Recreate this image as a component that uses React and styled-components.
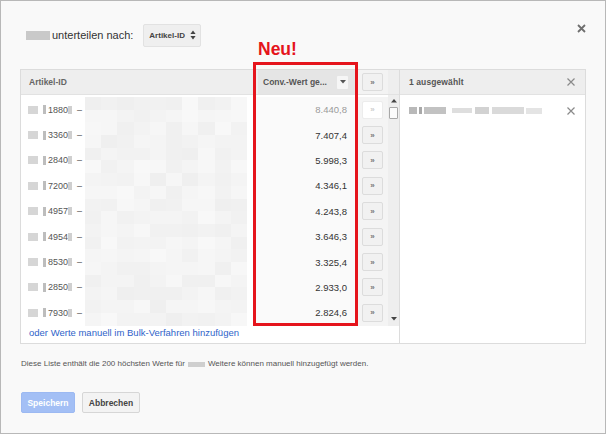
import React from "react";
import styled, { createGlobalStyle } from "styled-components";

const GlobalStyle = createGlobalStyle`
  html, body {
    margin: 0;
    padding: 0;
    background: #ffffff;
  }
  body {
    font-family: "Liberation Sans", Arial, sans-serif;
  }
`;

const ROWS = [
  { id: "1880", value: "8.440,8", added: true },
  { id: "3360", value: "7.407,4" },
  { id: "2840", value: "5.998,3" },
  { id: "7200", value: "4.346,1" },
  { id: "4957", value: "4.243,8" },
  { id: "4954", value: "3.646,3" },
  { id: "8530", value: "3.325,4" },
  { id: "2850", value: "2.933,0" },
  { id: "7930", value: "2.824,6" },
];

// deterministic light greys for the pixelated (blurred) product names
function shade(row, cell) {
  const n = Math.sin(row * 12.9898 + cell * 78.233) * 43758.5453;
  const f = n - Math.floor(n);
  const v = Math.round(239 + f * 9);
  return `rgb(${v},${v},${v})`;
}

export default function App() {
  return (
    <>
      <GlobalStyle />
      <Frame>
        <TopRow>
          <Blur $w={24} $h={9} $c="#c9c9c9" />
          <Label>unterteilen nach:</Label>
          <Select>
            Artikel-ID
            <svg width="6" height="10" viewBox="0 0 6 10">
              <path d="M3 0.5 L5.6 4 L0.4 4 Z M3 9.5 L5.6 6 L0.4 6 Z" fill="#444" />
            </svg>
          </Select>
          <Close>
            <svg width="9" height="9" viewBox="0 0 9 9">
              <path d="M1 1 L8 8 M8 1 L1 8" stroke="#6f6f6f" strokeWidth="1.8" />
            </svg>
          </Close>
        </TopRow>

        <Table>
          <LeftPanel>
            <HeadRow>
              <HeadCell>Artikel-ID</HeadCell>
              <SortHead>
                Conv.-Wert ge...
                <MiniDrop>
                  <svg width="6" height="4" viewBox="0 0 6 4">
                    <path d="M0 0 L6 0 L3 3.5 Z" fill="#555" />
                  </svg>
                </MiniDrop>
              </SortHead>
              <ActionHead>
                <AddButton>»</AddButton>
              </ActionHead>
              <ScrollHead />
            </HeadRow>

            <Body>
              <Rows>
                {ROWS.map((row, i) => (
                  <Row key={row.id}>
                    <IdCell>
                      <Blur $w={10} $h={8} $c="#d6d6d6" />
                      <Blur $w={3} $h={9} $c="#bdbdbd" $ml={5} />
                      <IdText>{row.id}</IdText>
                      <Blur $w={4} $h={8} $c="#cfcfcf" />
                      <Dash>–</Dash>
                      <Mosaic>
                        {Array.from({ length: 20 }).map((_, c) => (
                          <MosaicCell key={c} $bg={shade(i, c)} />
                        ))}
                      </Mosaic>
                    </IdCell>
                    <ValueCell $muted={row.added}>{row.value}</ValueCell>
                    <ActionCell>
                      <AddButton $disabled={row.added}>»</AddButton>
                    </ActionCell>
                  </Row>
                ))}
              </Rows>
              <Scrollbar>
                <svg width="6" height="4" viewBox="0 0 6 4">
                  <path d="M0 3.5 L6 3.5 L3 0 Z" fill="#444" />
                </svg>
                <Thumb />
                <Track />
                <svg width="6" height="4" viewBox="0 0 6 4">
                  <path d="M0 0 L6 0 L3 3.5 Z" fill="#444" />
                </svg>
              </Scrollbar>
            </Body>

            <LinkRow>
              <BulkLink href="#">oder Werte manuell im Bulk-Verfahren hinzufügen</BulkLink>
            </LinkRow>
          </LeftPanel>

          <RightPanel>
            <RightHead>
              1 ausgewählt
              <SmallX>
                <svg width="8" height="8" viewBox="0 0 8 8">
                  <path d="M0.5 0.5 L7.5 7.5 M7.5 0.5 L0.5 7.5" stroke="#8a8a8a" strokeWidth="1.2" />
                </svg>
              </SmallX>
            </RightHead>
            <SelectedRow>
              <SelectedName>
                <Blur $w={8} $h={7} $c="#b9b9b9" />
                <Blur $w={3} $h={7} $c="#a9a9a9" $ml={2} />
                <Blur $w={22} $h={7} $c="#c2c2c2" $ml={2} />
                <Blur $w={20} $h={5} $c="#dedede" $ml={6} />
                <Blur $w={14} $h={7} $c="#d2d2d2" $ml={3} />
                <Blur $w={32} $h={7} $c="#dadada" $ml={3} />
                <Blur $w={16} $h={6} $c="#e4e4e4" $ml={2} />
              </SelectedName>
              <SmallX>
                <svg width="8" height="8" viewBox="0 0 8 8">
                  <path d="M0.5 0.5 L7.5 7.5 M7.5 0.5 L0.5 7.5" stroke="#8a8a8a" strokeWidth="1.2" />
                </svg>
              </SmallX>
            </SelectedRow>
          </RightPanel>

          <NewLabel>Neu!</NewLabel>
          <Highlight />
        </Table>

        <Note>
          Diese Liste enthält die 200 höchsten Werte für
          <Blur $w={17} $h={5} $c="#cfcfcf" $ml={3} $mr={3} />
          Weitere können manuell hinzugefügt werden.
        </Note>

        <Buttons>
          <PrimaryButton>Speichern</PrimaryButton>
          <SecondaryButton>Abbrechen</SecondaryButton>
        </Buttons>
      </Frame>
    </>
  );
}

const Frame = styled.div`
  box-sizing: border-box;
  width: 606px;
  height: 434px;
  border: 1px solid #b8b8b8;
  background: #f9f9f9;
  padding: 22px 19px 0 19px;
  display: flex;
  flex-direction: column;
`;

const TopRow = styled.div`
  display: flex;
  align-items: center;
  height: 24px;
  padding-left: 6px;
`;

const Blur = styled.span`
  display: inline-block;
  flex: none;
  width: ${(p) => p.$w}px;
  height: ${(p) => p.$h}px;
  background: ${(p) => p.$c};
  margin-left: ${(p) => p.$ml || 0}px;
  margin-right: ${(p) => p.$mr || 0}px;
  filter: blur(0.7px);
  vertical-align: middle;
`;

const Label = styled.span`
  font-size: 11px;
  color: #333;
  margin-left: 2px;
  margin-right: 10px;
`;

const Select = styled.div`
  box-sizing: border-box;
  height: 23px;
  width: 58px;
  display: flex;
  align-items: center;
  justify-content: space-between;
  padding: 0 4px 0 5px;
  background: #efefef;
  border: 1px solid #e2e2e2;
  border-radius: 2px;
  font-size: 8px;
  font-weight: bold;
  color: #444;
`;

const Close = styled.div`
  margin-left: auto;
  align-self: flex-start;
  margin-top: 1px;
  display: flex;
`;

const Table = styled.div`
  position: relative;
  display: flex;
  margin-top: 22px;
  height: 275px;
`;

const LeftPanel = styled.div`
  box-sizing: border-box;
  width: 380px;
  border: 1px solid #dcdcdc;
  background: #ffffff;
  display: flex;
  flex-direction: column;
`;

const HeadRow = styled.div`
  display: grid;
  grid-template-columns: 232px 104px 31px 11px;
  height: 24px;
  background: #eeeeee;
  border-bottom: 1px solid #e2e2e2;
`;

const HeadCell = styled.div`
  display: flex;
  align-items: center;
  padding-left: 8px;
  font-size: 8.5px;
  font-weight: bold;
  color: #666;
`;

const SortHead = styled.div`
  display: flex;
  align-items: center;
  justify-content: space-between;
  margin: 0 2px 0 5px;
  padding: 0 7px 0 5px;
  background: #e5e5e5;
  font-size: 8.5px;
  font-weight: bold;
  color: #555;
`;

const MiniDrop = styled.div`
  width: 11px;
  height: 13px;
  display: flex;
  align-items: center;
  justify-content: center;
  background: #f6f6f6;
  border-radius: 1px;
`;

const ActionHead = styled.div`
  display: flex;
  align-items: center;
  justify-content: center;
  background: #f3f3f3;
`;

const ScrollHead = styled.div`
  background: #eeeeee;
`;

const Body = styled.div`
  display: flex;
  height: 231px;
`;

const Rows = styled.div`
  width: 367px;
  padding-top: 2px;
`;

const Row = styled.div`
  display: grid;
  grid-template-columns: 232px 104px 31px;
  height: 25.4px;
`;

const IdCell = styled.div`
  display: flex;
  align-items: center;
  padding-left: 7px;
`;

const IdText = styled.span`
  font-size: 9px;
  color: #555;
  margin-left: 2px;
`;

const Dash = styled.span`
  font-size: 9px;
  color: #555;
  margin: 0 3px 0 5px;
`;

const Mosaic = styled.div`
  width: 162px;
  height: 100%;
  display: grid;
  grid-template-columns: repeat(10, 1fr);
  grid-template-rows: 1fr 1fr;
`;

const MosaicCell = styled.div`
  background: ${(p) => p.$bg};
`;

const ValueCell = styled.div`
  display: flex;
  align-items: center;
  justify-content: flex-end;
  padding-right: 10px;
  background: #fafafa;
  font-size: 9.5px;
  color: ${(p) => (p.$muted ? "#9a9a9a" : "#333")};
`;

const ActionCell = styled.div`
  display: flex;
  align-items: center;
  justify-content: center;
  background: #f4f4f4;
`;

const AddButton = styled.div`
  box-sizing: border-box;
  width: 21px;
  height: 18px;
  display: flex;
  align-items: center;
  justify-content: center;
  border: 1px solid ${(p) => (p.$disabled ? "#ececec" : "#dcdcdc")};
  background: ${(p) => (p.$disabled ? "#ffffff" : "#f1f1f1")};
  border-radius: 2px;
  font-size: 8px;
  font-weight: bold;
  color: ${(p) => (p.$disabled ? "#cccccc" : "#777")};
`;

const Scrollbar = styled.div`
  width: 11px;
  background: #eeeeee;
  display: flex;
  flex-direction: column;
  align-items: center;
  padding: 4px 0 5px;
  box-sizing: border-box;
`;

const Thumb = styled.div`
  box-sizing: border-box;
  width: 9px;
  height: 12px;
  margin-top: 4px;
  background: #fbfbfb;
  border: 1px solid #a8a8a8;
  border-radius: 1px;
`;

const Track = styled.div`
  flex: 1;
`;

const LinkRow = styled.div`
  flex: 1;
  padding: 1px 0 0 8px;
  display: flex;
  align-items: flex-start;
  line-height: 12px;
`;

const BulkLink = styled.a`
  font-size: 9.5px;
  color: #2f63c9;
  text-decoration: none;
`;

const RightPanel = styled.div`
  box-sizing: border-box;
  flex: 1;
  border: 1px solid #dcdcdc;
  border-left: none;
  background: #ffffff;
`;

const RightHead = styled.div`
  height: 24px;
  display: flex;
  align-items: center;
  justify-content: space-between;
  padding: 0 10px 0 9px;
  background: #eeeeee;
  border-bottom: 1px solid #e2e2e2;
  font-size: 8.5px;
  font-weight: bold;
  color: #555;
  letter-spacing: 0.1px;
`;

const SmallX = styled.div`
  display: flex;
`;

const SelectedRow = styled.div`
  height: 27px;
  display: flex;
  align-items: center;
  justify-content: space-between;
  padding: 2px 10px 0 9px;
`;

const SelectedName = styled.div`
  display: flex;
  align-items: center;
`;

const NewLabel = styled.div`
  position: absolute;
  left: 238px;
  top: -30px;
  font-size: 17.5px;
  line-height: 20px;
  font-weight: bold;
  color: #e5141c;
`;

const Highlight = styled.div`
  position: absolute;
  left: 233px;
  top: -7px;
  width: 105px;
  height: 264px;
  box-sizing: border-box;
  border: 3px solid #e5141c;
  pointer-events: none;
`;

const Note = styled.div`
  display: flex;
  align-items: center;
  margin-top: 14px;
  font-size: 8px;
  line-height: 12px;
  color: #555;
  padding-left: 1px;
`;

const Buttons = styled.div`
  display: flex;
  gap: 7px;
  margin-top: 22px;
  padding-left: 1px;
`;

const ButtonBase = styled.div`
  box-sizing: border-box;
  height: 21px;
  display: flex;
  align-items: center;
  padding: 0 6px;
  border-radius: 2px;
  font-size: 8.5px;
  font-weight: bold;
`;

const PrimaryButton = styled(ButtonBase)`
  width: 54px;
  justify-content: center;
  background: #a3bff5;
  border: 1px solid #9cb9f2;
  color: #ffffff;
`;

const SecondaryButton = styled(ButtonBase)`
  width: 58px;
  justify-content: center;
  background: #f3f3f3;
  border: 1px solid #d6d6d6;
  color: #444;
`;
